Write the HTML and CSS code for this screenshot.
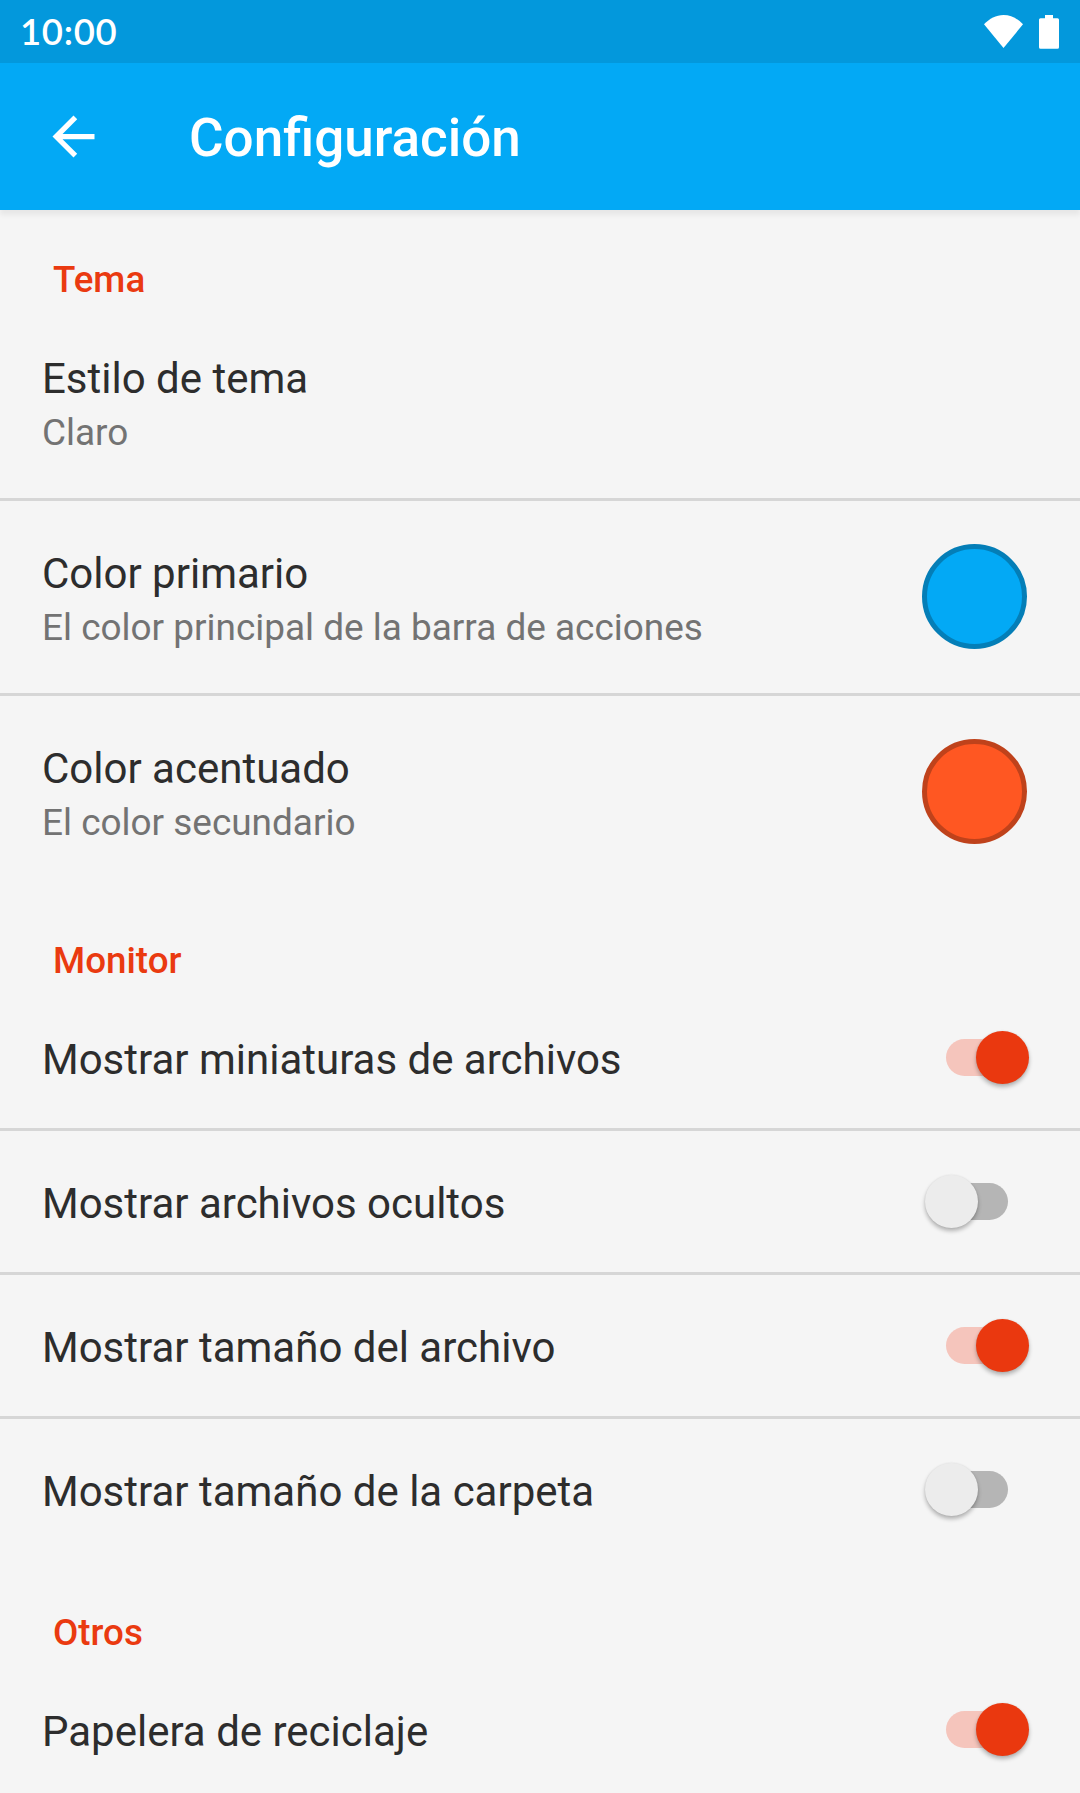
FILE: index.html
```html
<!DOCTYPE html>
<html lang="es">
<head>
  <meta charset="UTF-8" />
  <meta name="viewport" content="width=device-width, initial-scale=1.0"/>
  <title>Configuración</title>
  <link rel="stylesheet" href="styles.css">
</head>
<body>
  <div class="status-bar">
    <span class="clock">10:00</span>
    <div class="status-icons">
      <svg class="wifi-icon" width="39" height="33" viewBox="0 0 39 33">
        <path d="M0 9.3C5.5 3.5 12 0 19.5 0S33.500 3.500 39 9.300L19.500 33Z" fill="#fff"/>
      </svg>
      <svg class="battery-icon" width="20" height="34" viewBox="0 0 20 34">
        <path d="M6 0h8v3.300h4.500Q20 3.300 20 4.800V32.300Q20 33.800 18.500 33.800H1.500Q0 33.800 0 32.300V4.800Q0 3.300 1.500 3.300H6Z" fill="#fff"/>
      </svg>
    </div>
  </div>

  <header class="app-bar">
    <a href="#" class="back-btn" aria-label="Atrás">
      <svg width="63" height="63" viewBox="0 0 24 24">
        <path d="M20 11H7.830l5.590-5.590L12 4l-8 8 8 8 1.410-1.410L7.830 13H20v-2z" fill="#fff"/>
      </svg>
    </a>
    <h1 class="title">Configuración</h1>
  </header>

  <main>
    <!-- THEME -->
    <section class="group">
      <h2 class="group-title">Tema</h2>
      <div class="row">
        <div class="row-text">
          <p class="label">Estilo de tema</p>
          <p class="summary">Claro</p>
        </div>
      </div>
      <div class="row">
        <div class="row-text">
          <p class="label">Color primario</p>
          <p class="summary">El color principal de la barra de acciones</p>
        </div>
        <span class="swatch primary"></span>
      </div>
      <div class="row">
        <div class="row-text">
          <p class="label">Color acentuado</p>
          <p class="summary">El color secundario</p>
        </div>
        <span class="swatch accent"></span>
      </div>
    </section>

    <!-- DISPLAY -->
    <section class="group">
      <h2 class="group-title">Monitor</h2>
      <div class="row">
        <p class="label">Mostrar miniaturas de archivos</p>
        <span class="switch on"><span class="knob"></span></span>
      </div>
      <div class="row">
        <p class="label">Mostrar archivos ocultos</p>
        <span class="switch"><span class="knob"></span></span>
      </div>
      <div class="row">
        <p class="label">Mostrar tamaño del archivo</p>
        <span class="switch on"><span class="knob"></span></span>
      </div>
      <div class="row">
        <p class="label">Mostrar tamaño de la carpeta</p>
        <span class="switch"><span class="knob"></span></span>
      </div>
    </section>

    <!-- OTHER -->
    <section class="group">
      <h2 class="group-title">Otros</h2>
      <div class="row">
        <p class="label">Papelera de reciclaje</p>
        <span class="switch on"><span class="knob"></span></span>
      </div>
    </section>
  </main>
</body>
</html>
```
FILE: styles.css
```css
* {
  box-sizing: border-box;
}

html {
  overflow: hidden;
}

body {
  margin: 0;
  height: 1793px;
  overflow: hidden;
  font-family: Roboto, "Liberation Sans", sans-serif;
  background-color: #f5f5f5;
  color: #2d2d2d;
}

h1, h2, p {
  margin: 0;
}

.status-bar {
  height: 63px;
  padding: 0 21px 0 20px;
  display: flex;
  justify-content: space-between;
  align-items: center;
  background-color: #0398dc;
  color: #fff;
}

.clock {
  font-family: Lato, sans-serif;
  font-size: 36.5px;
  font-weight: 600;
  line-height: 44px;
  letter-spacing: 0.7px;
  padding-bottom: 1px;
}

.status-icons {
  display: flex;
  align-items: center;
  gap: 16px;
}

.app-bar {
  height: 147px;
  padding-left: 42px;
  display: flex;
  align-items: center;
  background-color: #03a9f5;
  box-shadow: 0 5px 5px rgba(0,0,0,0.06);
}

.back-btn {
  display: flex;
}

.title {
  margin-left: 84px;
  padding-top: 3px;
  color: #fff;
  font-size: 53px;
  font-weight: 500;
  line-height: 62px;
}

.group-title {
  height: 96px;
  padding: 48px 0 0 53px;
  color: #ea3a10;
  font-size: 36.75px;
  font-weight: 500;
  line-height: 43px;
}

.row {
  min-height: 144px;
  padding: 48px 53px 44px 42px;
  display: flex;
  justify-content: space-between;
  align-items: center;
  border-bottom: 3px solid #d6d6d6;
}

.row:last-child {
  border-bottom-color: transparent;
}

.label {
  font-size: 42px;
  line-height: 49px;
}

.summary {
  margin-top: 8px;
  color: #737373;
  font-size: 36.95px;
  line-height: 43px;
}

.swatch {
  width: 105px;
  height: 105px;
  margin: -9px 0 -4px;
  border: 5px solid;
  border-radius: 50%;
}

.primary {
  background-color: #03a9f5;
  border-color: #047eb7;
}

.accent {
  background-color: #ff5722;
  border-color: #bf421b;
}

.switch {
  width: 62px;
  height: 37px;
  margin: 0 19px 0 0;
  transform: translateY(-2px);
  display: flex;
  align-items: center;
  border-radius: 19px;
  background-color: #b5b5b5;
}

.knob {
  flex: none;
  width: 53px;
  height: 53px;
  margin-left: -21px;
  border-radius: 50%;
  background-color: #ececec;
  box-shadow: 0 3px 4px rgba(0,0,0,0.28), 0 0 2px rgba(0,0,0,0.08);
}

.switch.on {
  background-color: #f5c5bc;
}

.switch.on .knob {
  margin-left: 30px;
  background-color: #ea380f;
}
```
